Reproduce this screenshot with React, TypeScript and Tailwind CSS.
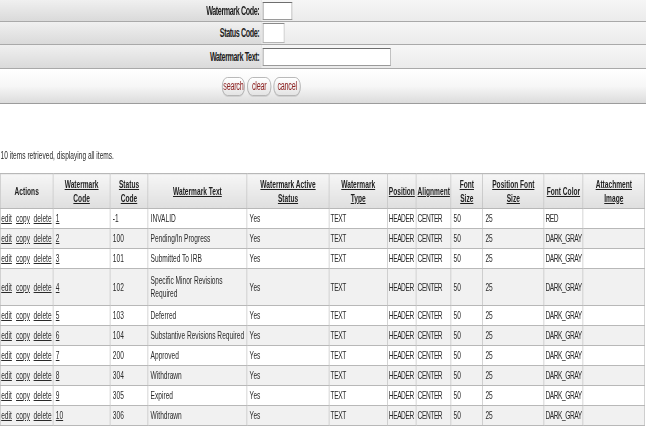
import React from "react";

/* ── Data ── */

type Row = {
  code: string;
  status: string;
  text: React.ReactNode;
  color: string;
  tall?: boolean;
};

const rows: Row[] = [
  { code: "1", status: "-1", text: "INVALID", color: "RED" },
  { code: "2", status: "100", text: "Pending/In Progress", color: "DARK_GRAY" },
  { code: "3", status: "101", text: "Submitted To IRB", color: "DARK_GRAY" },
  {
    code: "4",
    status: "102",
    text: (
      <>
        Specific Minor Revisions
        <br />
        Required
      </>
    ),
    color: "DARK_GRAY",
    tall: true,
  },
  { code: "5", status: "103", text: "Deferred", color: "DARK_GRAY" },
  { code: "6", status: "104", text: "Substantive Revisions Required", color: "DARK_GRAY" },
  { code: "7", status: "200", text: "Approved", color: "DARK_GRAY" },
  { code: "8", status: "304", text: "Withdrawn", color: "DARK_GRAY" },
  { code: "9", status: "305", text: "Expired", color: "DARK_GRAY" },
  { code: "10", status: "306", text: "Withdrawn", color: "DARK_GRAY" },
];

const columns: { label: React.ReactNode; width: string; link?: boolean }[] = [
  { label: "Actions", width: "w-[88px]" },
  { label: <>Watermark<br />Code</>, width: "w-[95px]", link: true },
  { label: <>Status<br />Code</>, width: "w-[63px]", link: true },
  { label: "Watermark Text", width: "w-[165px]", link: true },
  { label: <>Watermark Active<br />Status</>, width: "w-[137px]", link: true },
  { label: <>Watermark<br />Type</>, width: "w-[97px]", link: true },
  { label: "Position", width: "w-[48px]", link: true },
  { label: "Alignment", width: "w-[58px]", link: true },
  { label: <>Font<br />Size</>, width: "w-[53px]", link: true },
  { label: <>Position Font<br />Size</>, width: "w-[102px]", link: true },
  { label: "Font Color", width: "w-[65px]", link: true },
  { label: <>Attachment<br />Image</>, width: "w-[103px]", link: true },
];

/* ── Search form ── */

function FormRow({
  label,
  height,
  children,
}: {
  label: string;
  height: string;
  children: React.ReactNode;
}) {
  return (
    <div className={`flex ${height} border-b border-[#a9a9a9]`}>
      <div className="w-[436px] shrink-0 flex items-center justify-end pr-[3px] font-bold text-[12px] tracking-[-0.7px] text-[#1e1e1e] bg-gradient-to-b from-[#f0f0f0] to-[#dadada] border-r border-[#c8c8c8]">
        {label}
      </div>
      <div className="flex-1 flex items-center pl-[2px] bg-gradient-to-b from-[#f6f6f6] to-[#ebebeb]">
        {children}
      </div>
    </div>
  );
}

function Btn({ children, width }: { children: React.ReactNode; width: string }) {
  return (
    <button
      type="button"
      className={`${width} h-[19px] rounded-[9px] border border-[#a8a8a8] bg-gradient-to-b from-white to-[#e4e4e4] text-[#8e2424] text-[12px] tracking-[-0.4px] leading-none shadow-[0_1px_0_#d0d0d0]`}
    >
      {children}
    </button>
  );
}

function SearchForm() {
  return (
    <div>
      <FormRow label="Watermark Code:" height="h-[22px]">
        <input className="w-[49px] h-[18px] bg-white border border-[#9a9a9a] border-t-[#6e6e6e] border-l-[#6e6e6e]" />
      </FormRow>
      <FormRow label="Status Code:" height="h-[23px]">
        <input className="w-[36px] h-[20px] bg-white border border-[#b4b4b4] border-t-[#8a8a8a] border-l-[#8a8a8a]" />
      </FormRow>
      <FormRow label="Watermark Text:" height="h-[24px]">
        <input className="w-[213px] h-[18px] bg-white border border-[#9a9a9a] border-t-[#6e6e6e] border-l-[#6e6e6e]" />
      </FormRow>
      <div className="h-[35px] flex items-center pl-[370px] gap-[4px] bg-gradient-to-b from-white via-[#f7f7f7] to-[#dcdcdc] border-b border-[#9c9c9c]">
        <Btn width="w-[38px]">search</Btn>
        <Btn width="w-[40px]">clear</Btn>
        <Btn width="w-[45px]">cancel</Btn>
      </div>
    </div>
  );
}

/* ── Results table ── */

function ResultsTable() {
  const td =
    "border border-[#b8b8b8] px-[4px] align-middle text-left whitespace-nowrap leading-[13px]";
  const caps = "border border-[#b8b8b8] px-[2px] align-middle text-left whitespace-nowrap leading-[13px] tracking-[-0.7px]";

  return (
    <table className="border-collapse table-fixed w-[1075px] border border-[#a5a5a5] text-[#2a2a2a]">
      <thead>
        <tr className="h-[35px]">
          {columns.map((c, i) => (
            <th
              key={i}
              className={`${c.width} border border-[#b8b8b8] px-[2px] align-middle text-center font-bold text-[#1e1e1e] leading-[14px] whitespace-nowrap bg-gradient-to-b from-[#f6f6f6] to-[#dfdfdf]`}
            >
              {c.link ? <span className="underline">{c.label}</span> : c.label}
            </th>
          ))}
        </tr>
      </thead>
      <tbody>
        {rows.map((r, i) => (
          <tr
            key={r.code}
            className={`${r.tall ? "h-[37px]" : "h-[20px]"} ${
              i % 2 === 1 ? "bg-[#f1f1f1]" : "bg-white"
            }`}
          >
            <td className="border border-[#b8b8b8] pl-[1px] pr-0 align-middle whitespace-nowrap leading-[13px]">
              <span className="underline">edit</span>
              <span className="underline ml-[7px]">copy</span>
              <span className="underline ml-[6px]">delete</span>
            </td>
            <td className={`${td} px-[3px]`}>
              <span className="underline">{r.code}</span>
            </td>
            <td className={td}>{r.status}</td>
            <td className={td}>{r.text}</td>
            <td className={td}>Yes</td>
            <td className={caps}>TEXT</td>
            <td className={caps}>HEADER</td>
            <td className={caps}>CENTER</td>
            <td className={td}>50</td>
            <td className={td}>25</td>
            <td className={caps}>{r.color}</td>
            <td className={td}></td>
          </tr>
        ))}
      </tbody>
    </table>
  );
}

/* ── Page ── */

export default function App() {
  return (
    <div className="w-[646px] h-[429px] overflow-hidden bg-white">
      <div className="w-[1077px] origin-top-left scale-x-60 font-['Liberation_Sans',Arial,sans-serif] text-[11px]">
        <SearchForm />
        <div className="pt-[45px] leading-[13px] text-[#2a2a2a] pl-[1px]">
          10 items retrieved, displaying all items.
        </div>
        <div className="mt-[11px]">
          <ResultsTable />
        </div>
      </div>
    </div>
  );
}
